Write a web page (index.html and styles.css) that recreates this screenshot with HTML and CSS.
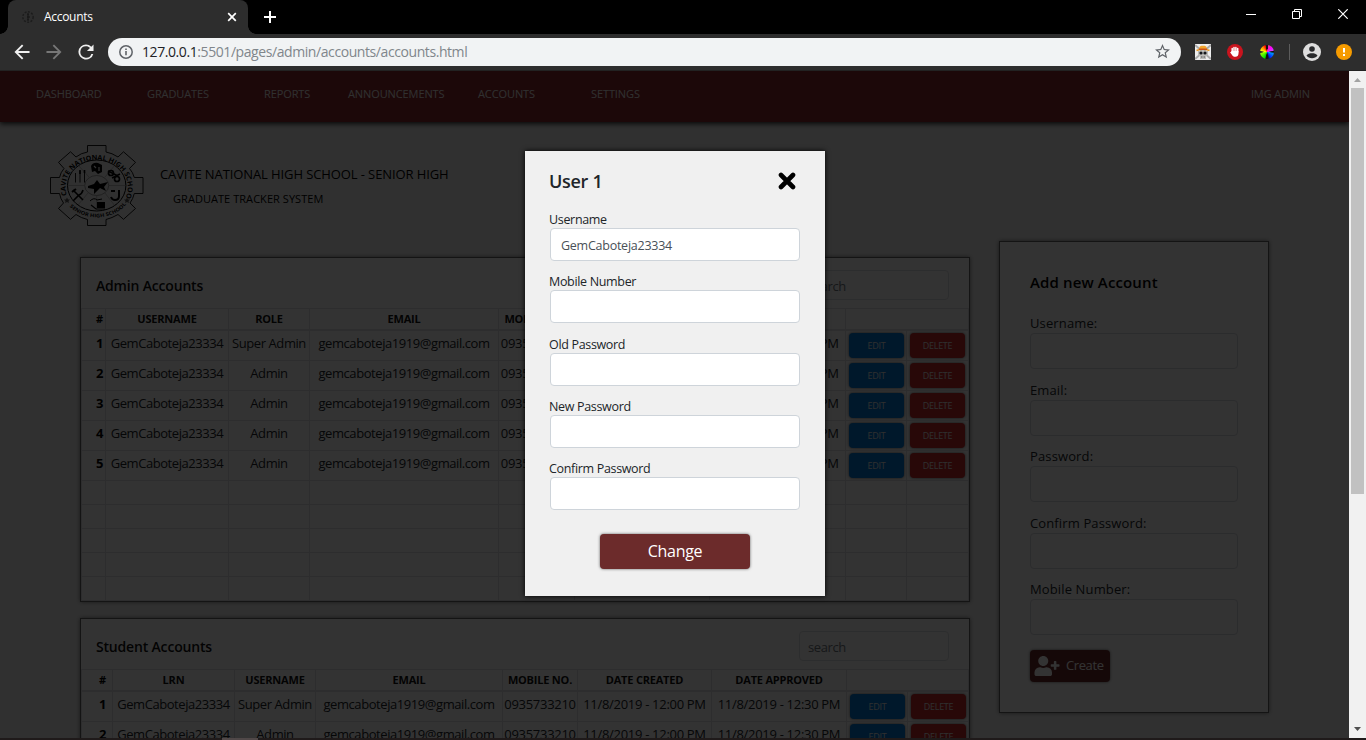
FILE: index.html
```html
<!DOCTYPE html>
<html lang="en">
<head>
<meta charset="utf-8">
<title>Accounts</title>
<link rel="stylesheet" href="styles.css">
</head>
<body>
<div class="window">
  <header class="tabstrip">
    <div class="tab">
      <svg class="favicon" width="16" height="16" viewBox="0 0 16 16"><circle cx="8" cy="8" r="5.2" fill="none" stroke="#1c1c1c" stroke-width="1.4" stroke-dasharray="2 1.4"/><path d="M7 5h2M7 8h3M8 5v6M9 11h-2" stroke="#151515" fill="none"/></svg>
      <span class="tab-title">Accounts</span>
      <svg class="tab-close" width="10" height="10" viewBox="0 0 10 10"><path d="M1.2 1.2l7.6 7.6M8.8 1.2L1.2 8.8" stroke="#fff" stroke-width="1.7"/></svg>
    </div>
    <svg class="new-tab" width="12" height="12" viewBox="0 0 12 12"><path d="M6 0v12M0 6h12" stroke="#fff" stroke-width="2"/></svg>
    <div class="win-controls">
      <svg width="10" height="10" viewBox="0 0 10 10"><path d="M0 5.5h10" stroke="#fff"/></svg>
      <svg width="10" height="10" viewBox="0 0 10 10"><path d="M.5 2.5h7v7h-7zM2.5 2.5v-2h7v7h-2" fill="none" stroke="#fff"/></svg>
      <svg width="10" height="10" viewBox="0 0 10 10"><path d="M.3 .3l9.4 9.4M9.7 .3L.3 9.7" stroke="#fff" stroke-width="1.2"/></svg>
    </div>
  </header>
  <div class="toolbar">
    <svg class="back" width="16" height="16" viewBox="3.500 3.500 17 17"><path d="M20 11H7.830l5.590-5.590L12 4l-8 8 8 8 1.410-1.410L7.830 13H20v-2z" fill="#f0f0f0"/></svg>
    <svg class="forward" width="16" height="16" viewBox="3.500 3.500 17 17"><path d="M12 4l-1.410 1.410L16.170 11H4v2h12.170l-5.580 5.590L12 20l8-8z" fill="#777"/></svg>
    <svg class="reload" width="16" height="16" viewBox="3.500 3.500 17 17"><path d="M17.65 6.35A7.96 7.96 0 0 0 12 4a8 8 0 1 0 7.73 10h-2.08A6 6 0 1 1 12 6c1.66 0 3.14.69 4.22 1.78L13 11h7V4l-2.35 2.35z" fill="#eee"/></svg>
    <div class="omnibox">
      <svg width="14" height="14" viewBox="0 0 14 14"><circle cx="7" cy="7" r="6.2" fill="none" stroke="#5f6368" stroke-width="1.5"/><path d="M7 6v4.2M7 3.5v1.6" stroke="#5f6368" stroke-width="1.6"/></svg>
      <span class="url"><span class="host">127.0.0.1</span>:5501/pages/admin/accounts/accounts.html</span>
      <svg class="star" width="15" height="15" viewBox="2 2 20 20"><path d="M22 9.24l-7.19-.62L12 2 9.19 8.63 2 9.24l5.46 4.73L5.82 21 12 17.27 18.18 21l-1.63-7.03L22 9.24zM12 15.4l-3.76 2.27 1-4.28-3.32-2.88 4.38-.38L12 6.1l1.71 4.04 4.38.38-3.32 2.88 1 4.28L12 15.4z" fill="#5f6368"/></svg>
    </div>
    <svg class="ext-skull" width="16" height="16" viewBox="0 0 16 16"><path d="M0 0h16v16H0z" fill="#eee"/><path d="M0 1l16 14M16 1L0 15" stroke="#aaa" stroke-width="2"/><path d="M3 7h10v4l-2 1v3H5v-3l-2-1z" fill="#bcbcb8"/><path d="M4 5.5C4 2 6 1.800 8 1.800s4 .2 4 3.700z" fill="#f2a52c"/><path d="M1.500 6.500q6.500-2.500 13 0" fill="none" stroke="#e89a24" stroke-width="1.700"/><path d="M4 5.200h8" stroke="#bd2f17"/><circle cx="6" cy="9" r="1.600" fill="#16191c"/><circle cx="10" cy="9" r="1.600" fill="#16191c"/><path d="M6 13h4" stroke="#555" stroke-dasharray="1 .5"/></svg>
    <svg class="ext-hand" width="16" height="16" viewBox="0 0 16 16"><circle cx="8" cy="8" r="8" fill="#c9141e"/><path d="M5.200 8V4.600M7 7V3.400M8.900 7V3.400M10.700 8V4.600" stroke="#fff" stroke-width="1.500" stroke-linecap="round"/><path d="M4.500 7h7v2.500c0 2-1.200 3.300-3 3.300-2 0-3-.8-3.800-2.300L3 8.300l1-.3z" fill="#fff"/></svg>
    <span class="ext-wheel"></span>
    <span class="divider"></span>
    <svg class="profile" width="18" height="18" viewBox="0 0 18 18"><circle cx="9" cy="9" r="9" fill="#dedede"/><circle cx="9" cy="6" r="2.800" fill="#292a2c"/><path d="M3.500 12.500C4.500 10.800 7 10.200 9 10.200s4.500.6 5.500 2.300C13.200 14.300 11.300 15.200 9 15.200s-4.200-.9-5.500-2.700z" fill="#292a2c"/></svg>
    <svg class="update" width="16" height="16" viewBox="0 0 16 16"><circle cx="8" cy="8" r="8" fill="#f69b00"/><path d="M8 4v4.500M8 10v2" stroke="#fff" stroke-width="2"/></svg>
  </div>

  <div class="viewport">
    <div class="page">
      <nav class="nav">
        <a class="n1">DASHBOARD</a><a class="n2">GRADUATES</a><a class="n3">REPORTS</a><a class="n4">ANNOUNCEMENTS</a><a class="n5">ACCOUNTS</a><a class="n6">SETTINGS</a><a class="n7">IMG ADMIN</a>
      </nav>
      <div class="brand">
        <svg class="seal" width="94" height="82" viewBox="0 0 94 82">
          <defs><path id="arc-top" d="M18 53A31.200 27.500 0 1 1 75.400 53"/><path id="arc-bottom" d="M17 58.500A36 31 0 0 0 77 58.500"/></defs>
          <path d="M37.500 7V.5H56V7Q62 8 68 12L73.500 6.800 85.500 17.300 79.500 23.500Q83 27.500 84.300 32.500H93V48.500H84.300Q83 54 80 58L85.500 63.500 73.500 74.300 68 69.500Q62 73 56 74.500V80.500H37.500V74.500Q31 73 26 69.500L20.500 74.300 8.500 63.500 13.500 58Q10.500 54 9.500 48.500H.5V32.500H9.500Q10.500 27.500 14 23.500L8.500 17.300 20.500 6.800 26 12Q31 8 37.500 7z" fill="none" stroke="#000" stroke-width=".9"/>
          <ellipse cx="46.700" cy="40.500" rx="29.200" ry="25.500" fill="none" stroke="#000" stroke-width="1"/>
          <ellipse cx="46.700" cy="40.500" rx="12" ry="10" fill="none" stroke="#666" stroke-width=".6"/>
          <path d="M18 40.500h16M59 40.500h16M39 32L28 20M55 32L65 20M38 48L28 60M55 48L65 61M46.700 51v14" stroke="#888" stroke-width=".5"/>
          <path d="M25.500 28v9.500M30 26v11.500M34.500 26v11.500" stroke="#000" stroke-width=".9"/><path d="M30 25v4M34.500 25v3" stroke="#000" stroke-width="1.600"/>
          <path d="M41 21q2-4 7-3l4 2v7l-4 2-3-3-3 1z"/><path d="M44 21l2 2M49 22v4" stroke="#fff" stroke-width="1.200"/>
          <circle cx="61" cy="28" r="2.500" fill="none" stroke="#000" stroke-width="1.700"/><circle cx="67" cy="34" r="2.500" fill="none" stroke="#000" stroke-width="1.700"/><path d="M58 26l10 5M62 33l8-4" stroke="#000" stroke-width="1.500"/>
          <path d="M38 41l6-2 3-4 3 4 8-2-4 5 2 4-6-3-6 6v-5l-6-1z"/>
          <path d="M23 45l10 10M33 45q-1 4-4 5l-6 6" stroke="#000" stroke-width="1.600" fill="none"/><path d="M22 47l4-3" stroke="#000" stroke-width="2"/>
          <path d="M61 46h4M69 45v6q0 4-4 4-3 0-4-3" stroke="#000" stroke-width="2" fill="none"/>
          <path d="M40 56q4-4 7-1l5-1" fill="none" stroke="#000"/><path d="M47 57h8v6h-8z"/><path d="M41 60l5 4h9" fill="none" stroke="#000" stroke-width="1.200"/>
          <path d="M17 52.500l1 2h2l-1.500 1.500.5 2-2-1-2 1 .5-2L14 54.500h2zM77 52.500l1 2h2l-1.500 1.500.5 2-2-1-2 1 .5-2-1.500-1.500h2z" fill="#555"/>
          <text class="seal-top"><textPath href="#arc-top" startOffset="3" textLength="115" lengthAdjust="spacingAndGlyphs">CAVITE NATIONAL HIGH SCHOOL</textPath></text>
          <text class="seal-bottom"><textPath href="#arc-bottom" startOffset="4" textLength="63" lengthAdjust="spacingAndGlyphs">SENIOR HIGH SCHOOL</textPath></text>
        </svg>
        <div class="brand-text">
          <div class="brand-name">CAVITE NATIONAL HIGH SCHOOL - SENIOR HIGH</div>
          <div class="brand-sub">GRADUATE TRACKER SYSTEM</div>
        </div>
      </div>
      <main class="content">
        <div class="tables">
          <section class="card admin">
            <div class="card-head"><h2>Admin Accounts</h2><span class="search">search</span></div>
            <table>
              <colgroup><col class="w25"><col class="w123"><col class="w81"><col class="w189"><col class="w76"><col class="w135"><col class="w136"><col class="w61"><col class="w62"></colgroup>
              <thead><tr><th class="num">#</th><th>USERNAME</th><th>ROLE</th><th>EMAIL</th><th>MOBILE NO.</th><th>DATE CREATED</th><th>DATE APPROVED</th><th colspan="2"></th></tr></thead>
              <tbody>
                <tr><td class="num">1</td><td>GemCaboteja23334</td><td>Super Admin</td><td>gemcaboteja1919@gmail.com</td><td>0935733210</td><td>11/8/2019 - 12:00 PM</td><td>11/8/2019 - 12:30 PM</td><td class="act"><span class="btn edit">EDIT</span></td><td class="act"><span class="btn delete">DELETE</span></td></tr>
                <tr><td class="num">2</td><td>GemCaboteja23334</td><td>Admin</td><td>gemcaboteja1919@gmail.com</td><td>0935733210</td><td>11/8/2019 - 12:00 PM</td><td>11/8/2019 - 12:30 PM</td><td class="act"><span class="btn edit">EDIT</span></td><td class="act"><span class="btn delete">DELETE</span></td></tr>
                <tr><td class="num">3</td><td>GemCaboteja23334</td><td>Admin</td><td>gemcaboteja1919@gmail.com</td><td>0935733210</td><td>11/8/2019 - 12:00 PM</td><td>11/8/2019 - 12:30 PM</td><td class="act"><span class="btn edit">EDIT</span></td><td class="act"><span class="btn delete">DELETE</span></td></tr>
                <tr><td class="num">4</td><td>GemCaboteja23334</td><td>Admin</td><td>gemcaboteja1919@gmail.com</td><td>0935733210</td><td>11/8/2019 - 12:00 PM</td><td>11/8/2019 - 12:30 PM</td><td class="act"><span class="btn edit">EDIT</span></td><td class="act"><span class="btn delete">DELETE</span></td></tr>
                <tr><td class="num">5</td><td>GemCaboteja23334</td><td>Admin</td><td>gemcaboteja1919@gmail.com</td><td>0935733210</td><td>11/8/2019 - 12:00 PM</td><td>11/8/2019 - 12:30 PM</td><td class="act"><span class="btn edit">EDIT</span></td><td class="act"><span class="btn delete">DELETE</span></td></tr>
                <tr class="empty"><td></td><td></td><td></td><td></td><td></td><td></td><td></td><td></td><td></td></tr>
                <tr class="empty"><td></td><td></td><td></td><td></td><td></td><td></td><td></td><td></td><td></td></tr>
                <tr class="empty"><td></td><td></td><td></td><td></td><td></td><td></td><td></td><td></td><td></td></tr>
                <tr class="empty"><td></td><td></td><td></td><td></td><td></td><td></td><td></td><td></td><td></td></tr>
                <tr class="empty"><td></td><td></td><td></td><td></td><td></td><td></td><td></td><td></td><td></td></tr>
              </tbody>
            </table>
          </section>
          <section class="card student">
            <div class="card-head"><h2>Student Accounts</h2><span class="search">search</span></div>
            <table>
              <colgroup><col class="w32"><col class="w122"><col class="w81"><col class="w187"><col class="w75"><col class="w134"><col class="w135"><col class="w61"><col class="w61"></colgroup>
              <thead><tr><th class="num">#</th><th>LRN</th><th>USERNAME</th><th>EMAIL</th><th>MOBILE NO.</th><th>DATE CREATED</th><th>DATE APPROVED</th><th colspan="2"></th></tr></thead>
              <tbody>
                <tr><td class="num">1</td><td>GemCaboteja23334</td><td>Super Admin</td><td>gemcaboteja1919@gmail.com</td><td>0935733210</td><td>11/8/2019 - 12:00 PM</td><td>11/8/2019 - 12:30 PM</td><td class="act"><span class="btn edit">EDIT</span></td><td class="act"><span class="btn delete">DELETE</span></td></tr>
                <tr><td class="num">2</td><td>GemCaboteja23334</td><td>Admin</td><td>gemcaboteja1919@gmail.com</td><td>0935733210</td><td>11/8/2019 - 12:00 PM</td><td>11/8/2019 - 12:30 PM</td><td class="act"><span class="btn edit">EDIT</span></td><td class="act"><span class="btn delete">DELETE</span></td></tr>
              </tbody>
            </table>
          </section>
        </div>
        <aside class="card add">
          <h3>Add new Account</h3>
          <label>Username:<span class="field"></span></label>
          <label>Email:<span class="field"></span></label>
          <label>Password:<span class="field"></span></label>
          <label>Confirm Password:<span class="field"></span></label>
          <label>Mobile Number:<span class="field"></span></label>
          <span class="create">
            <svg width="26" height="20" viewBox="0 0 640 512"><path d="M624 208h-64v-64c0-8.800-7.200-16-16-16h-32c-8.800 0-16 7.200-16 16v64h-64c-8.800 0-16 7.200-16 16v32c0 8.800 7.200 16 16 16h64v64c0 8.800 7.200 16 16 16h32c8.800 0 16-7.200 16-16v-64h64c8.800 0 16-7.200 16-16v-32c0-8.800-7.200-16-16-16zM224 256c70.700 0 128-57.300 128-128S294.700 0 224 0 96 57.300 96 128s57.300 128 128 128zm89.600 32h-16.700a174 174 0 0 1-145.800 0h-16.700A134.400 134.400 0 0 0 0 422.400V464c0 26.500 21.500 48 48 48h352c26.500 0 48-21.500 48-48v-41.600A134.400 134.400 0 0 0 313.600 288z" fill="#fff"/></svg>
            <span class="create-text">Create</span>
          </span>
        </aside>
      </main>
      <div class="overlay">
        <form class="modal">
          <div class="modal-head"><h3>User 1</h3>
            <svg width="18" height="18" viewBox="0 0 18 18"><path d="M3 3l12 12M15 3L3 15" stroke="#000" stroke-width="4.600" stroke-linecap="round"/></svg></div>
          <label><span class="caption">Username</span><span class="input">GemCaboteja23334</span></label>
          <label><span class="caption">Mobile Number</span><span class="input"></span></label>
          <label><span class="caption">Old Password</span><span class="input"></span></label>
          <label><span class="caption">New Password</span><span class="input"></span></label>
          <label><span class="caption">Confirm Password</span><span class="input"></span></label>
          <span class="change">Change</span>
        </form>
      </div>
    </div>
    <div class="scrollbar">
      <svg width="17" height="17" viewBox="0 0 17 17"><path d="M5 11h7L8.500 7z" fill="#a3a3a3"/></svg>
      <span class="thumb"></span>
      <svg class="down" width="17" height="17" viewBox="0 0 17 17"><path d="M5 6h7L8.500 10z" fill="#505050"/></svg>
    </div>
  </div>
  <div class="taskbar"><span></span></div>
</div>
</body>
</html>
```

FILE: styles.css
```css
* { box-sizing: border-box; }
body { margin: 0; font-family: "Open Sans", "Noto Sans", sans-serif; background: #000; }
svg { display: block; flex: none; }
h2, h3 { margin: 0; font-weight: 600; white-space: nowrap; }
.window { width: 1366px; height: 740px; overflow: hidden; display: flex; flex-direction: column; }

/* browser frame */
.tabstrip { height: 34px; flex: none; display: flex; align-items: flex-start; padding-left: 8px; background: #000; }
.tab { width: 240px; height: 34px; background: #2d2d2d; border-radius: 8px 8px 0 0; display: flex; align-items: center; padding: 0 12px 0 12px; position: relative; }
.tab::before, .tab::after { content: ""; position: absolute; bottom: 0; width: 8px; height: 8px; }
.tab::before { left: -8px; background: radial-gradient(circle at 0 0, transparent 7.5px, #2d2d2d 8px); }
.tab::after { right: -8px; background: radial-gradient(circle at 100% 0, transparent 7.5px, #2d2d2d 8px); }
.favicon { margin-right: 8px; }
.tab-title { color: #fff; font-size: 12px; line-height: 16px; padding-bottom: 1px; letter-spacing: -.3px; flex: 1; }
.tab-close { margin-right: -1px; }
.new-tab { margin: 11px 0 0 16px; }
.win-controls { margin-left: auto; display: flex; gap: 36px; padding: 9px 18px 0 0; }
.toolbar { height: 37px; flex: none; display: flex; align-items: center; background: #2d2d2d; padding: 0 14px 1px 14px; border-bottom: 1px solid #222; }
.forward, .reload { margin-left: 16px; }
.omnibox { width: 1073px; flex: none; height: 28px; margin-left: 14px; border-radius: 14px; background: #f1f3f4; display: flex; align-items: center; padding: 0 11px; }
.url { flex: 1; margin-left: 9px; font-size: 14px; letter-spacing: -.42px; color: #80868b; line-height: 20px; }
.host { color: #202124; }
.ext-skull { margin-left: 14px; }
.ext-hand { margin-left: 16px; }
.ext-wheel { width: 14px; height: 14px; flex: none; margin-left: 17px; border-radius: 50%; background: conic-gradient(#111 10deg, #f030a0 12deg, #f0f 45deg, #d040ff 75deg, #111 85deg 92deg, #00a0ff 100deg, #0020ff 150deg, #111 172deg 188deg, #00e000 200deg, #a0ff00 262deg, #222 266deg 274deg, #ff0 280deg, #f80 320deg, #f00 345deg, #111 352deg); }
.divider { width: 1px; height: 16px; flex: none; background: #5c5c5c; margin-left: 15px; }
.profile { margin-left: 13px; }
.update { margin-left: 15px; }

/* page */
.viewport { flex: 1; min-height: 0; display: flex; }
.page { width: 1349px; height: 667px; position: relative; overflow: hidden; background: #f0f0f0; color: #212529; }
.nav { height: 51px; background: #8c282d; box-shadow: 0 2px 5px rgba(0,0,0,.8); display: flex; padding: 15px 39px 0 36px; font-size: 11px; line-height: 16px; color: #efefef; letter-spacing: -.1px; }
.nav a { white-space: nowrap; }
.n1 { width: 111px; } .n2 { width: 117px; } .n3 { width: 84px; } .n4 { width: 130px; } .n5 { width: 113px; }
.n7 { margin-left: auto; }
.brand { display: flex; padding: 23px 0 0 50px; height: 119px; color: #000; }
.seal-top { font: 700 6.8px "Open Sans", sans-serif; }
.seal-bottom { font: 700 5px "Open Sans", sans-serif; }
.brand-text { margin-left: 16px; padding-top: 20px; white-space: nowrap; }
.brand-name { font-size: 13px; line-height: 18px; letter-spacing: -.1px; }
.brand-sub { font-size: 11px; line-height: 16px; margin: 8px 0 0 13px; letter-spacing: .05px; }
.content { display: flex; gap: 29px; align-items: flex-start; padding-left: 80px; }
.tables { padding-top: 16px; display: flex; flex-direction: column; gap: 16px; }
.card { background: #fff; border: 1px solid #666; box-shadow: 0 0 4px rgba(0,0,0,.5); }
.admin, .student { width: 890px; height: 345px; overflow: hidden; }
.card-head { height: 50px; display: flex; justify-content: space-between; padding: 12px 20px 0 15px; }
.card-head h2 { font-size: 14px; line-height: 32px; letter-spacing: -.18px; color: #111; }
.search { width: 150px; height: 30px; border: 1px solid #dcdfe3; border-radius: 4px; padding-left: 8px; font-size: 13px; line-height: 31px; letter-spacing: -.4px; color: #70777e; }
table { width: 888px; table-layout: fixed; border-spacing: 0; border-collapse: separate; border-left: 1px solid #dee2e6; }
.w25 { width: 24px; } .w32 { width: 31px; } .w61 { width: 61px; } .w62 { width: 62px; } .w75 { width: 75px; } .w76 { width: 76px; } .w81 { width: 81px; }
.w122 { width: 122px; } .w123 { width: 123px; } .w134 { width: 134px; } .w135 { width: 135px; } .w136 { width: 136px; } .w187 { width: 187px; } .w189 { width: 189px; }
th, td { padding: 0; text-align: center; white-space: nowrap; overflow: hidden; border-right: 1px solid #dee2e6; border-bottom: 1px solid #dee2e6; }
th { height: 23px; border-top: 1px solid #dee2e6; border-bottom-width: 2px; font-size: 11px; line-height: 18px; font-weight: 700; color: #111; letter-spacing: -.2px; }
td { height: 30px; font-size: 13px; line-height: 18px; padding-bottom: 5px; letter-spacing: -.43px; }
td:nth-child(5), td:nth-child(6), td:nth-child(7) { letter-spacing: -.3px; }
td.num, th.num { text-align: right; padding-right: 2px; font-weight: 700; color: #000; }
.student .num { padding-right: 6px; }
td.act { padding: 0 0 1px 3px; text-align: left; }
.empty td { height: 24px; }
.btn { display: block; width: 55px; height: 25px; border-radius: 4px; color: #e8e8e8; font-size: 9px; line-height: 25px; text-align: center; letter-spacing: -.3px; box-shadow: 0 0 3px rgba(0,0,0,.6); }
.edit { background: #0078d7; }
.delete { background: #c62828; }
.add { width: 270px; height: 472px; padding: 29px 30px 0 30px; letter-spacing: .13px; }
.add h3 { font-size: 15px; line-height: 22px; margin-bottom: 21px; color: #000; }
.add label { display: block; height: 66.5px; font-size: 13px; line-height: 19px; }
.field { display: block; width: 208px; height: 36px; border: 1px solid #d5d9de; border-radius: 4px; }
.create { display: flex; align-items: center; gap: 6px; width: 80px; height: 32px; margin-top: 3px; padding-left: 4px; border-radius: 4px; background: #6c2b2b; color: #fff; font-size: 13px; box-shadow: 0 0 3px rgba(0,0,0,.6); letter-spacing: -.4px; }
.create-text { padding-bottom: 2px; }

/* dialog */
.overlay { position: absolute; inset: 0; background: rgba(0,0,0,.8); padding: 80px 0 0 525px; }
.modal { width: 300px; height: 445px; background: #f0f0f0; padding: 0 25px; box-shadow: 0 0 5px #000; color: #212529; }
.modal-head { height: 59px; display: flex; justify-content: space-between; align-items: center; padding: 0 4px 0 0; margin-left: -1px; }
.modal h3 { font-size: 18px; line-height: 24px; letter-spacing: -.3px; }
.modal label { display: block; height: 62.25px; font-size: 12.5px; line-height: 18px; letter-spacing: -.33px; }
.caption { display: block; height: 18px; line-height: 20px; margin-left: -1px; }
.input { display: block; height: 33px; background: #fff; border: 1px solid #ced4da; border-radius: 4px; padding-left: 10px; font-size: 12.5px; line-height: 33px; letter-spacing: -.25px; color: #495057; }
.change { display: block; width: 150px; height: 35px; margin: 13px auto 0; border-radius: 4px; background: #6c2b2b; color: #fff; text-align: center; font-size: 16px; line-height: 35px; box-shadow: 0 0 3px rgba(0,0,0,.6); letter-spacing: -.3px; }

.scrollbar { width: 17px; background: #f1f1f1; display: flex; flex-direction: column; }
.thumb { height: 406px; margin: 0 2px; background: #c1c1c1; }
.down { margin-top: auto; }
.taskbar { height: 2px; flex: none; background: #1f1a1a; padding-left: 222px; }
.taskbar span { display: block; width: 36px; height: 2px; background: #504848; }
```
